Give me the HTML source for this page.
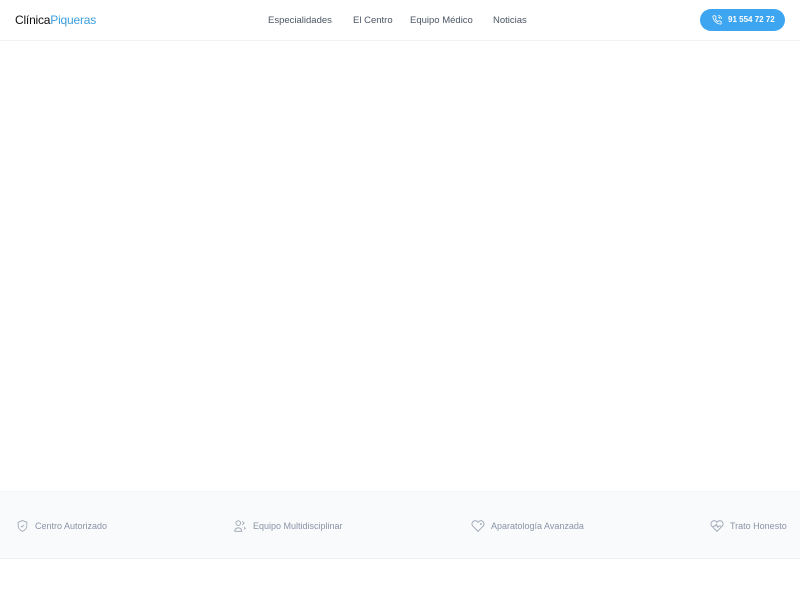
<!DOCTYPE html>
<html><head><meta charset="utf-8"><style>
*{margin:0;padding:0;box-sizing:border-box}
body{width:800px;height:600px;background:#fff;font-family:"Liberation Sans",sans-serif;position:relative;overflow:hidden}
.hdr{position:absolute;left:0;top:0;width:800px;height:41px;border-bottom:1px solid #f1f3f5}
.logo{position:absolute;left:15px;top:13px;font-size:12px;color:#111;letter-spacing:-0.2px}
.logo span{color:#3b9fe0}
.nav{position:absolute;top:14.5px;font-size:9.5px;color:#4b5563}
.btn{position:absolute;left:700px;top:9px;width:85px;height:22px;border-radius:11px;background:#3ea6f0;color:#fff;font-size:8px;font-weight:bold;line-height:22px;padding-left:28px}
.btn svg{position:absolute;left:12px;top:6px}
.band{position:absolute;left:0;top:491px;width:800px;height:68px;background:#f8fafc;border-bottom:1px solid #eef0f3;border-top:1px solid #f4f6f8}
.it{position:absolute;top:29px;font-size:9px;color:#8a94a6}
.ic{position:absolute;top:27px}
</style></head><body>
<div class="hdr">
<div class="logo">Clínica<span>Piqueras</span></div>
<div class="nav" style="left:268px">Especialidades</div>
<div class="nav" style="left:353px">El Centro</div>
<div class="nav" style="left:410px">Equipo Médico</div>
<div class="nav" style="left:493px">Noticias</div>
<div class="btn"><svg width="10" height="10" viewBox="0 0 24 24" fill="none" stroke="#fff" stroke-width="2"><path d="M22 16.9v3a2 2 0 0 1-2.2 2 19.8 19.8 0 0 1-8.6-3.1 19.5 19.5 0 0 1-6-6A19.8 19.8 0 0 1 2.1 4.2 2 2 0 0 1 4.1 2h3a2 2 0 0 1 2 1.7c.1 1 .4 1.9.7 2.8a2 2 0 0 1-.5 2.1L8 9.9a16 16 0 0 0 6 6l1.3-1.3a2 2 0 0 1 2.1-.4c.9.3 1.8.6 2.8.7a2 2 0 0 1 1.7 2z"/><path d="M15 5a5 5 0 0 1 4 4M15 1a9 9 0 0 1 8 8"/></svg>91 554 72 72</div>
</div>
<div class="band">
<svg class="ic" style="left:16px" width="13" height="14" viewBox="0 0 24 24" fill="none" stroke="#9aa3b2" stroke-width="1.5"><path d="M12 22s8-4 8-10V5l-8-3-8 3v7c0 6 8 10 8 10z"/><path d="M9 12l2 2 4-4"/></svg>
<div class="it" style="left:35px">Centro Autorizado</div>
<svg class="ic" style="left:233px" width="14" height="14" viewBox="0 0 24 24" fill="none" stroke="#9aa3b2" stroke-width="1.5"><circle cx="9" cy="7" r="4"/><path d="M3 21c0-4 3-6 6-6s6 2 6 6H3z"/><path d="M16 4l3 3-3 3M19 14l2 2-2 2"/></svg>
<div class="it" style="left:253px">Equipo Multidisciplinar</div>
<svg class="ic" style="left:471px" width="14" height="14" viewBox="0 0 24 24" fill="none" stroke="#9aa3b2" stroke-width="1.5"><path d="M20.8 4.6a5.5 5.5 0 0 0-7.8 0L12 5.7l-1-1.1a5.5 5.5 0 0 0-7.8 7.8L12 21.2l8.8-8.8a5.5 5.5 0 0 0 0-7.8z"/><path d="M17 7v3M15.5 8.5h3"/></svg>
<div class="it" style="left:491px">Aparatología Avanzada</div>
<svg class="ic" style="left:710px" width="14" height="14" viewBox="0 0 24 24" fill="none" stroke="#9aa3b2" stroke-width="1.5"><path d="M20.8 4.6a5.5 5.5 0 0 0-7.8 0L12 5.7l-1-1.1a5.5 5.5 0 0 0-7.8 7.8L12 21.2l8.8-8.8a5.5 5.5 0 0 0 0-7.8z"/><path d="M5 12h4l2-3 2 5 2-2h4"/></svg>
<div class="it" style="left:730px">Trato Honesto</div>
</div>
</body></html>
